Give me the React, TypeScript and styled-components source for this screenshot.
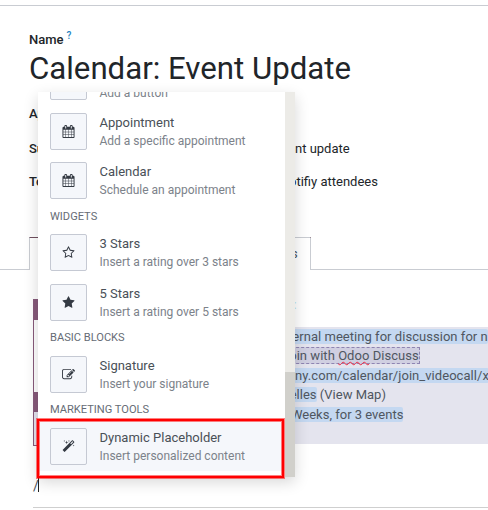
import React from "react";
import styled, { createGlobalStyle } from "styled-components";

const Global = createGlobalStyle`
  * { box-sizing: border-box; }
  html, body { margin: 0; padding: 0; background: #fff; overflow: hidden; }
  body { font-family: Roboto, "Liberation Sans", sans-serif; color: #212529; font-size: 13px; }
`;

const Page = styled.main`
  position: relative;
  width: 488px;
  height: 510px;
  overflow: hidden;
  background: #fff;
  display: flex;
  flex-direction: column;
`;

const TopRule = styled.div`
  height: 6px;
  flex: none;
  border-bottom: 1px solid #c9ccd2;
`;

const FormHeader = styled.header`
  height: 91px;
  padding: 26px 0 0 29px;
  flex: none;
`;

const NameLabel = styled.div`
  display: flex;
  height: 16px;
  line-height: 16px;
  font-weight: 500;
  font-size: 13px;
`;

const Help = styled.sup`
  margin-left: 3px;
  font-size: 10px;
  line-height: 8px;
  font-weight: 500;
  color: #2483c0;
`;

const Title = styled.h1`
  margin: 0;
  height: 42px;
  line-height: 41px;
  font-weight: 400;
  font-size: 31.2px;
  white-space: nowrap;
`;

const Fields = styled.section`
  height: 140px;
  flex: none;
  display: flex;
  flex-direction: column;
`;

const Field = styled.div<{ $height: number }>`
  display: grid;
  grid-template-columns: 266px 1fr;
  height: ${(p) => p.$height}px;
  line-height: 34px;
  padding-left: 29px;
  white-space: nowrap;
`;

const FieldLabel = styled.span`
  font-weight: 500;
`;

const FieldValue = styled.span<{ $shift?: number }>`
  margin-left: ${(p) => p.$shift ?? 0}px;
`;

const Tabs = styled.nav`
  display: grid;
  grid-template-columns: 29px 1fr 177px;
  height: 33px;
  flex: none;
`;

const TabRule = styled.div`
  border-bottom: 1px solid #c9ccd2;
`;

const Tab = styled.div`
  border: 1px solid #c9ccd2;
  border-bottom: 0;
  border-top-color: #70505f;
  display: grid;
  grid-template-columns: 1fr 48px;
`;

const TabEnd = styled.span`
  margin-top: -1px;
  border-top: 1px solid #c9ccd2;
  line-height: 32px;
  padding-left: 29px;
  color: #495057;
`;

const MailBody = styled.section`
  display: grid;
  grid-template-columns: 255px 1fr;
  height: 176px;
  margin: 29px 0 0 33px;
  flex: none;
`;

const MailFrame = styled.div`
  height: 147px;
  border-left: 1px solid #875a7b;
  border-bottom: 1px solid #875a7b;
  display: flex;
  flex-direction: column;
`;

const Band = styled.div<{ $height: number; $color: string }>`
  height: ${(p) => p.$height}px;
  background: ${(p) => p.$color};
`;

const MailColumn = styled.div`
  min-width: 0;
`;

const MailHeading = styled.div`
  height: 28px;
  padding-left: 5.5px;
  line-height: 12px;
  font-size: 13px;
  color: #b9e4ec;
`;

const MailText = styled.div`
  height: 117px;
  background: #e4e4ee;
  color: #4f5660;
  font-size: 13px;
  white-space: pre;
  overflow: hidden;
`;

const Line = styled.div<{ $height: number; $shift?: number; $spacing?: number }>`
  height: ${(p) => p.$height}px;
  margin-left: ${(p) => p.$shift ?? 0}px;
  letter-spacing: ${(p) => p.$spacing ?? 0}px;
  display: flex;
  align-items: center;
`;

const Selected = styled.span<{ $fill?: boolean }>`
  flex: ${(p) => (p.$fill ? "1" : "none")};
  height: 15px;
  line-height: 15px;
  background: #c4d8f1;
  border-radius: 2px;
`;

const JoinLink = styled.span`
  height: 17px;
  line-height: 15px;
  background: #d0cfe1;
  border: 1px dashed #8e84b2;
`;

const Misspelled = styled.span`
  text-decoration: underline wavy #ef2640 1px;
  text-underline-offset: 1px;
  text-decoration-skip-ink: none;
`;

const TypingLine = styled.div`
  margin-left: 33px;
  height: 33px;
  flex: none;
  border-bottom: 1px solid #cfcfcf;
  padding-top: 3px;
  display: flex;
  color: #495057;
  line-height: 16px;
  font-size: 14px;
`;

const Caret = styled.i`
  width: 1px;
  height: 14px;
  margin-left: -1px;
  background: #222;
`;

const Menu = styled.aside`
  position: absolute;
  left: 38px;
  top: 92px;
  width: 257px;
  height: 385px;
  display: flex;
  background: #fff;
  box-shadow: 0 5px 14px rgba(0, 0, 0, 0.16);
`;

const MenuList = styled.div`
  width: 247px;
  height: 385px;
  overflow: hidden;
  display: flex;
  flex-direction: column;
`;

const Scrollbar = styled.div`
  width: 10px;
  background: #ecebe7;
  display: flex;
  align-items: flex-end;
`;

const Thumb = styled.div`
  width: 10px;
  height: 105px;
  background: #d1d0cb;
`;

const Command = styled.div<{ $active?: boolean; $height?: number; $pull?: number }>`
  flex: none;
  height: ${(p) => p.$height ?? 50}px;
  margin-top: ${(p) => p.$pull ?? 0}px;
  padding: 7px 0 0 12px;
  display: flex;
  gap: 12.5px;
  background: ${(p) => (p.$active ? "#f5f7fb" : "transparent")};
`;

const IconBox = styled.div`
  width: 37px;
  height: 37px;
  flex: none;
  border: 1px solid #c5c9d3;
  border-radius: 2px;
  background: #f5f7fb;
  display: flex;
  align-items: center;
  justify-content: center;
  color: #343a43;
`;

const CommandText = styled.div<{ $drop?: number }>`
  display: flex;
  flex-direction: column;
  padding-top: ${(p) => p.$drop ?? 1}px;
  white-space: nowrap;
`;

const CommandName = styled.span`
  height: 18px;
  line-height: 18px;
  font-size: 13px;
  color: #495057;
`;

const CommandHint = styled.span`
  height: 18px;
  line-height: 18px;
  font-size: 12px;
  color: #7c828a;
`;

const Category = styled.div<{ $line?: number }>`
  flex: none;
  height: 22px;
  padding-left: 12px;
  line-height: ${(p) => p.$line ?? 21}px;
  font-size: 11.1px;
  color: #666c75;
`;

const Highlight = styled.div`
  position: absolute;
  left: 37px;
  top: 419px;
  width: 247px;
  height: 59px;
  border: 2px solid #ff0000;
  box-shadow: 0 0 0 1px rgba(255, 0, 0, 0.5), inset 0 0 0 1px rgba(255, 0, 0, 0.5);
`;

const paths = {
  calendar:
    "M192 1664h288v-288h-288v288zm352 0h320v-288h-320v288zm-352-352h288v-320h-288v320zm352 0h320v-320h-320v320zm-352-384h288v-288h-288v288zm736 736h320v-288h-320v288zm-384-736h320v-288h-320v288zm768 736h288v-288h-288v288zm-384-352h320v-320h-320v320zm-352-864v-288q0-13-9.5-22.5t-22.5-9.5h-64q-13 0-22.5 9.5t-9.5 22.5v288q0 13 9.5 22.5t22.5 9.5h64q13 0 22.5-9.5t9.5-22.5zm736 864h288v-320h-288v320zm-384-384h320v-288h-320v288zm384 0h288v-288h-288v288zm32-480v-288q0-13-9.5-22.5t-22.5-9.5h-64q-13 0-22.5 9.5t-9.5 22.5v288q0 13 9.5 22.5t22.5 9.5h64q13 0 22.5-9.5t9.5-22.5zm384-64v1280q0 52-38 90t-90 38h-1408q-52 0-90-38t-38-90v-1280q0-52 38-90t90-38h128v-96q0-66 47-113t113-47h64q66 0 113 47t47 113v96h384v-96q0-66 47-113t113-47h64q66 0 113 47t47 113v96h128q52 0 90 38t38 90z",
  star: "M1728 647q0 22-26 48l-363 354 86 500q1 7 1 20 0 21-10.5 35.5t-30.5 14.5q-19 0-40-12l-449-236-449 236q-22 12-40 12-21 0-31.5-14.5t-10.5-35.5q0-6 2-20l86-500-364-354q-25-27-25-48 0-37 56-46l502-73 225-455q19-41 49-41t49 41l225 455 502 73q56 9 56 46z",
  starOutline:
    "M1201 1004l306-297-422-62-189-382-189 382-422 62 306 297-73 421 378-199 377 199zm527-357q0 22-26 48l-363 354 86 500q1 7 1 20 0 50-41 50-19 0-40-12l-449-236-449 236q-22 12-40 12-21 0-31.5-14.5t-10.5-35.5q0-6 2-20l86-500-364-354q-25-27-25-48 0-37 56-46l502-73 225-455q19-41 49-41t49 41l225 455 502 73q56 9 56 46z",
  edit: "M888 1184l116-116-152-152-116 116v56h96v96h56zm440-720q-16-16-33 1l-350 350q-17 17-1 33t33-1l350-350q17-17 1-33zm80 594v190q0 119-84.5 203.5t-203.5 84.5h-832q-119 0-203.5-84.5t-84.5-203.5v-832q0-119 84.5-203.5t203.5-84.5h832q63 0 117 25 15 7 18 23 3 17-9 29l-49 49q-14 14-32 8-23-6-45-6h-832q-66 0-113 47t-47 113v832q0 66 47 113t113 47h832q66 0 113-47t47-113v-126q0-13 9-22l64-64q15-15 35-7t20 29zm-96-738l288 288-672 672h-288v-288zm444 132l-92 92-288-288 92-92q28-28 68-28t68 28l152 152q28 28 28 68t-28 68z",
  magic:
    "M1254 581l293-293-107-107-293 293zm447-293q0 27-18 45l-1286 1286q-18 18-45 18t-45-18l-198-198q-18-18-18-45t18-45l1286-1286q18-18 45-18t45 18l198 198q18 18 18 45zm-1351-190l98 30-98 30-30 98-30-98-98-30 98-30 30-98zm350 162l196 60-196 60-60 196-60-196-196-60 196-60 60-196zm930 478l98 30-98 30-30 98-30-98-98-30 98-30 30-98zm-640-640l98 30-98 30-30 98-30-98-98-30 98-30 30-98z",
};

type IconName = keyof typeof paths;

function Icon({ name }: { name: IconName }) {
  return (
    <svg width="13" height="13" viewBox="0 0 1792 1792" fill="currentColor" aria-hidden="true">
      <path d={paths[name]} />
    </svg>
  );
}

interface ItemProps {
  icon?: IconName;
  name?: string;
  hint: string;
  active?: boolean;
  height?: number;
  pull?: number;
  drop?: number;
}

function Item({ icon, name, hint, active, height, pull, drop }: ItemProps) {
  return (
    <Command $active={active} $height={height} $pull={pull}>
      <IconBox>{icon && <Icon name={icon} />}</IconBox>
      <CommandText $drop={drop}>
        <CommandName>{name}</CommandName>
        <CommandHint>{hint}</CommandHint>
      </CommandText>
    </Command>
  );
}

export default function App() {
  return (
    <>
      <Global />
      <Page>
        <TopRule />
        <FormHeader>
          <NameLabel>
            Name<Help>?</Help>
          </NameLabel>
          <Title>Calendar: Event Update</Title>
        </FormHeader>
        <Fields>
          <Field $height={35}>
            <FieldLabel>Ap</FieldLabel>
          </Field>
          <Field $height={33}>
            <FieldLabel>Su</FieldLabel>
            <FieldValue>nt update</FieldValue>
          </Field>
          <Field $height={34}>
            <FieldLabel>To</FieldLabel>
            <FieldValue $shift={-6}>otifiy attendees</FieldValue>
          </Field>
        </Fields>
        <Tabs>
          <TabRule />
          <Tab>
            <span />
            <TabEnd>s</TabEnd>
          </Tab>
          <TabRule />
        </Tabs>
        <MailBody>
          <MailFrame>
            <Band $height={21} $color="#875a7b" />
            <Band $height={72} $color="#fff" />
            <Band $height={20} $color="#875a7b" />
            <Band $height={33} $color="#e4e4ee" />
          </MailFrame>
          <MailColumn>
            <MailHeading>:</MailHeading>
            <MailText>
              <Line $height={19} $spacing={0.04}>
                <Selected $fill>ternal meeting for discussion for n</Selected>
              </Line>
              <Line $height={19} $shift={-7} $spacing={0.04}>
                <JoinLink>
                  Join with <Misspelled>Odoo</Misspelled> Discuss
                </JoinLink>
              </Line>
              <Line $height={20} $spacing={0.05}>
                <Selected $fill>any.com/calendar/join_videocall/x</Selected>
              </Line>
              <Line $height={19} $shift={-5}>
                <Selected>selles</Selected> (View Map)
              </Line>
              <Line $height={20} $shift={3}>
                <Selected>Weeks, for 3 events</Selected>
              </Line>
            </MailText>
          </MailColumn>
        </MailBody>
        <TypingLine>
          /<Caret />
        </TypingLine>
        <Menu>
          <MenuList>
            <Item hint="Add a button" pull={-36} drop={3} />
            <Item icon="calendar" name="Appointment" hint="Add a specific appointment" height={49} />
            <Item icon="calendar" name="Calendar" hint="Schedule an appointment" />
            <Category $line={23}>WIDGETS</Category>
            <Item icon="starOutline" name="3 Stars" hint="Insert a rating over 3 stars" />
            <Item icon="star" name="5 Stars" hint="Insert a rating over 5 stars" />
            <Category>BASIC BLOCKS</Category>
            <Item icon="edit" name="Signature" hint="Insert your signature" />
            <Category>MARKETING TOOLS</Category>
            <Item icon="magic" name="Dynamic Placeholder" hint="Insert personalized content" active />
          </MenuList>
          <Scrollbar>
            <Thumb />
          </Scrollbar>
        </Menu>
        <Highlight />
      </Page>
    </>
  );
}
